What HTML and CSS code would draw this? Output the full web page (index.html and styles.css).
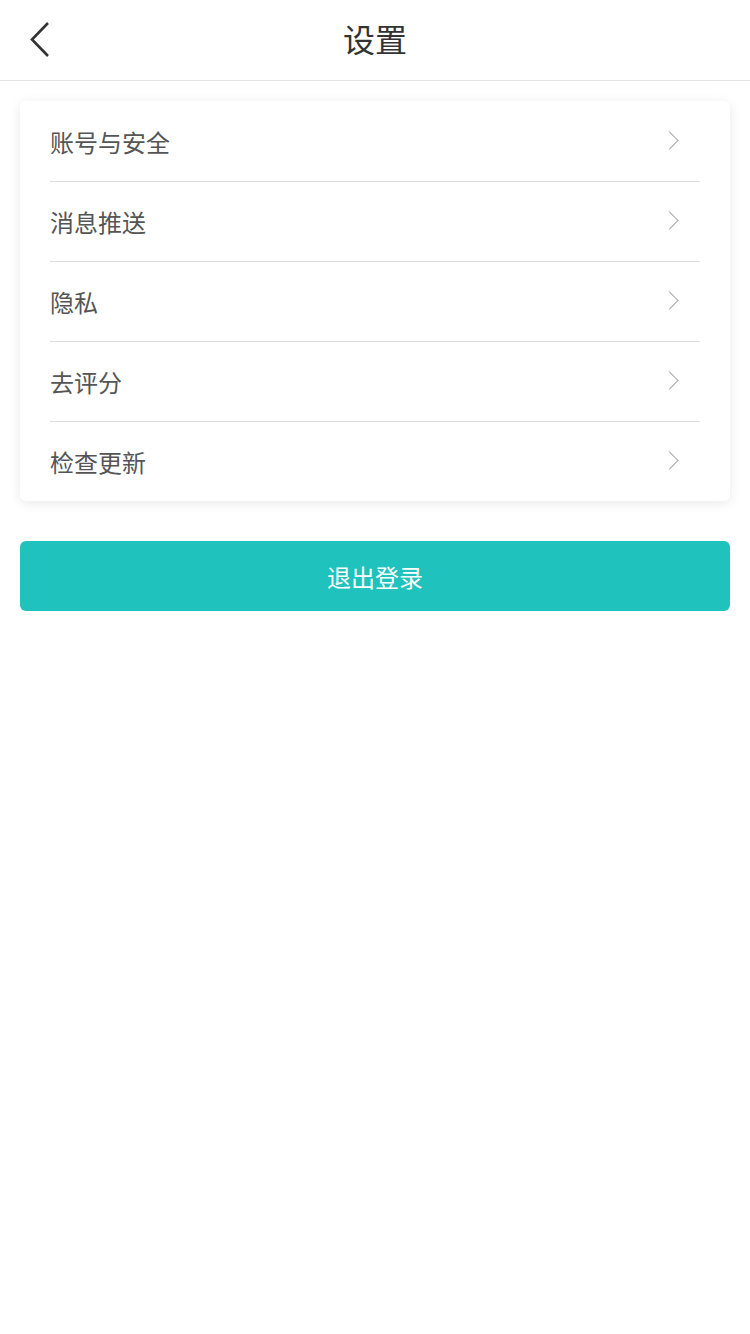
FILE: index.html
```html
<!DOCTYPE html>
<html lang="zh-CN">
<head>
  <meta charset="UTF-8">
  <title>设置</title>
  <link rel="stylesheet" href="styles.css">
</head>
<body>
  <div class="topbar">
    <span class="back">
      <svg width="24" height="40" viewBox="0 0 24 40"><path d="M19 3 L3 19.5 L19 36" fill="none" stroke="#333" stroke-width="2.6"/></svg>
    </span>
    <h1 class="title">设置</h1>
  </div>

  <div class="card">
    <div class="row"><span>账号与安全</span><i class="arrow"></i></div>
    <div class="row"><span>消息推送</span><i class="arrow"></i></div>
    <div class="row"><span>隐私</span><i class="arrow"></i></div>
    <div class="row"><span>去评分</span><i class="arrow"></i></div>
    <div class="row"><span>检查更新</span><i class="arrow"></i></div>
  </div>

  <button class="logout">退出登录</button>
</body>
</html>
```

FILE: styles.css
```css
body { margin: 0; background: #fff; font-family: "Noto Sans CJK SC", "Noto Sans", sans-serif; }
.topbar { height: 80px; border-bottom: 1px solid #e3e3e3; display: flex; align-items: center; justify-content: center; position: relative; }
.back { position: absolute; left: 29px; top: 20px; }
.title { margin: -4px 0 0; font-size: 32px; font-weight: normal; color: #333; }
.card { margin: 20px 20px 0; padding: 1px 30px 0; border-radius: 6px; background: #fff; box-shadow: 0 2px 12px rgba(0,0,0,0.09); }
.row { height: 80px; box-sizing: border-box; border-bottom: 1px solid #ddd; display: flex; align-items: center; justify-content: space-between; font-size: 24px; color: #555; }
.row:last-child { border-bottom: none; height: 79px; }
.arrow { width: 12px; height: 12px; border-top: 1.5px solid #a8a8a8; border-right: 1.5px solid #a8a8a8; transform: rotate(45deg); margin-right: 24px; margin-top: -2px; }
.logout { display: block; margin: 40px 20px 0; width: 710px; height: 70px; border: none; border-radius: 6px; background: #1fc2bd; color: #fff; font-family: inherit; font-size: 24px; }
```
